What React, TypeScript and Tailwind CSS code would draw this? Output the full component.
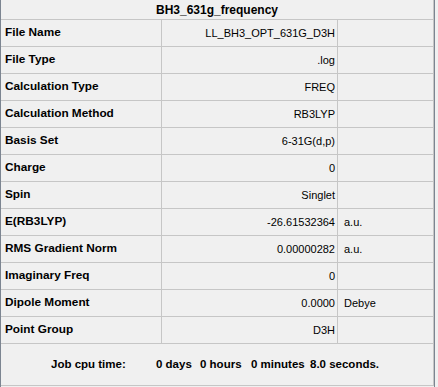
import React from 'react';

interface Row {
  label: string;
  value: string;
  unit?: string;
}

const rows: Row[] = [
  { label: 'File Name', value: 'LL_BH3_OPT_631G_D3H' },
  { label: 'File Type', value: '.log' },
  { label: 'Calculation Type', value: 'FREQ' },
  { label: 'Calculation Method', value: 'RB3LYP' },
  { label: 'Basis Set', value: '6-31G(d,p)' },
  { label: 'Charge', value: '0' },
  { label: 'Spin', value: 'Singlet' },
  { label: 'E(RB3LYP)', value: '-26.61532364', unit: 'a.u.' },
  { label: 'RMS Gradient Norm', value: '0.00000282', unit: 'a.u.' },
  { label: 'Imaginary Freq', value: '0' },
  { label: 'Dipole Moment', value: '0.0000', unit: 'Debye' },
  { label: 'Point Group', value: 'D3H' },
];

const App: React.FC = () => {
  return (
    <div className="w-[438px] h-[387px] bg-[#f0f0f0] text-black font-['Liberation_Sans',Arial,sans-serif] overflow-hidden">
      <div className="w-[435px] h-[387px] border-l border-r border-[#7c8591] flex flex-col">
        <div className="h-[20px] border-b border-r border-[#c6c6c6] flex items-center justify-center text-[12px] font-bold">
          BH3_631g_frequency
        </div>

        {rows.map((row) => (
          <div key={row.label} className="grid grid-cols-[161px_176px_96px] h-[27px]">
            <div className="border-b border-r border-[#c6c6c6] flex items-center pl-[4px] text-[11.8px] font-bold">
              {row.label}
            </div>
            <div className="border-b border-r border-[#c6c6c6] flex items-center justify-end pr-[2px] text-[11px]">
              {row.value}
            </div>
            <div className="border-b border-r border-[#c6c6c6] flex items-center pl-[6px] text-[11px]">
              {row.unit}
            </div>
          </div>
        ))}

        <div className="h-[42px] border-b border-r border-[#c6c6c6] flex items-center pl-[50px] text-[11.5px] font-bold whitespace-nowrap">
          <span className="w-[105px] shrink-0">Job cpu time:</span>
          <span className="w-[44px] shrink-0">0 days</span>
          <span className="w-[51px] shrink-0">0 hours</span>
          <span className="w-[59px] shrink-0">0 minutes</span>
          <span>8.0 seconds.</span>
        </div>
      </div>
    </div>
  );
};

export default App;
